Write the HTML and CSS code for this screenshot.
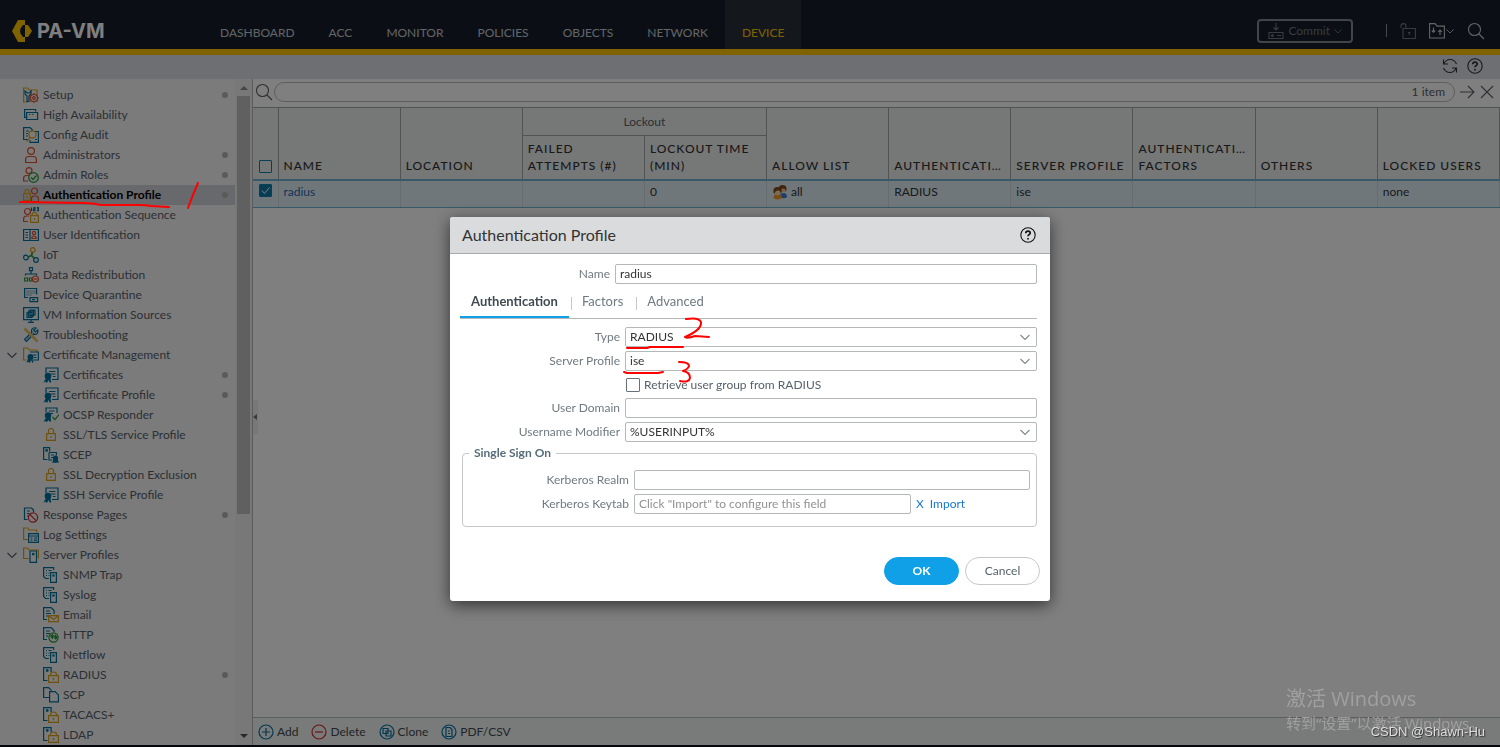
FILE: index.html
```html
<!DOCTYPE html>
<html lang="en">

<head>
    <meta charset="utf-8">
    <meta name="viewport" content="width=device-width, initial-scale=1.0">
    <title>PA-VM</title>
    <link rel="stylesheet" href="styles.css">
</head>

<body>

<!-- icon set -->
<svg class="sprite" aria-hidden="true">
  <symbol id="i-setup" viewBox="0 0 16 16"><path class="y" d="M5 15H.6V1h4l1.500 2H14v4"/><path class="b" d="M2 4v3l2 2v5.400h2V9l2-2V4L6.500 6h-2z"/><circle class="r" cx="11" cy="11" r="3.500"/><circle class="r" cx="11" cy="11" r="1.300"/><path class="r" d="M11 6v1.500M11 14.500V16M6 11h1.500M14.500 11H16M7.500 7.500l1 1M13.500 13.500l1 1M14.500 7.500l-1 1M8.500 13.500l-1 1"/></symbol>
  <symbol id="i-ha" viewBox="0 0 16 16"><path class="b" d="M3.600 10.500H1.600v-8h11v2M3.600 5.500h11v7h-11z"/><path class="g" d="M6 7.500h1.500M9 7.500h1.500"/></symbol>
  <symbol id="i-audit" viewBox="0 0 16 16"><path class="b" d="M5 12.500H.6V.6h6.500l2 2V4M3 4h3M3 6.500h2M3 9h2M12 4.500h3.400v10.900H7V13M12 12.500h2"/><circle class="y" cx="9.500" cy="7.500" r="3.600"/><path class="y" d="M7 10.500L3.500 14.500"/></symbol>
  <symbol id="i-admin" viewBox="0 0 16 16"><circle class="r" cx="8" cy="4" r="3.400"/><path class="r" d="M2.600 15.500v-3q0-3 3-3h4.800q3 0 3 3v3z"/></symbol>
  <symbol id="i-roles" viewBox="0 0 16 16"><circle class="r" cx="6" cy="3.600" r="3"/><path class="r" d="M5 14H.6v-2.500q0-3 3-3H6"/><circle class="g" cx="10.500" cy="10.500" r="4.800"/><path class="g" d="M8 10.500l2 2 3.500-4"/></symbol>
  <symbol id="i-auth" viewBox="0 0 16 16"><circle class="r" cx="11.500" cy="4" r="3"/><path class="r" d="M8.500 14.500h7V12q0-3-3-3h-1.500q-2.500 0-2.500 3z"/><path class="y" d="M.6 6.600h6.800v6.800H.6zM2 6.500v-2q0-2 2-2t2 2v2M4 9v2.500"/></symbol>
  <symbol id="i-seq" viewBox="0 0 16 16"><circle class="r" cx="4.500" cy="4.500" r="3"/><path class="r" d="M5 14.500H.6V12q0-3 3-3H6"/><path class="y" d="M7.600 8.600h7.800v6.800H7.600zM9 8.500V8q0-2.500 2.500-2.500T14 8v.5M11.500 11v2"/><path class="b" d="M8.500.5v3.500M10.500.6h1.500v1.500h-1.500v1.600h2M14 .6h1.500v3H14M14 2h1.500"/></symbol>
  <symbol id="i-userid" viewBox="0 0 16 16"><path class="b" d="M.6 2.500h14.800v11H.6zM7 2.500v11M2.500 5.500h2.500M2.500 8h2.500M2.500 10.500h2.500"/><circle class="r" cx="11" cy="6" r="1.600"/><path class="r" d="M8.800 11.500q0-2.500 2.200-2.500t2.200 2.500z"/></symbol>
  <symbol id="i-iot" viewBox="0 0 16 16"><path class="g w2" d="M5 10l3.500-1.500L9.500 5M8.500 8.500l3 3"/><circle class="y" cx="9.800" cy="2.900" r="2.300"/><circle class="b" cx="2.900" cy="10.500" r="2.300"/><circle class="b" cx="13" cy="13" r="2.300"/></symbol>
  <symbol id="i-redist" viewBox="0 0 16 16"><path class="b" d="M6.500.6h3v3h-3zM8 4v3M2.500 8.500V7h11v1.500"/><path class="g" d="M1.600 11h3v3h-3zM6.500 11h2.500v3H6.500z"/><circle class="r" cx="12.500" cy="12" r="3"/><path class="r" d="M10.800 12h3.400"/></symbol>
  <symbol id="i-quar" viewBox="0 0 16 16"><path class="b" d="M5 10.500H1.600v-9h12v6M7 10.600h7.600v4H7zM9 12.600h3"/><path class="b dash" d="M3.500 4h9M3.500 6h9M3.500 8h6"/></symbol>
  <symbol id="i-vm" viewBox="0 0 16 16"><path class="b" d="M.6.6h14.800v12H.6zM8 13v2.300M5 15.400h6"/><path class="b" d="M4 5.500h5v5H4zM7 3h5v5H7zM5.500 4.200h5v5h-5z"/></symbol>
  <symbol id="i-tools" viewBox="0 0 16 16"><path class="s w3" d="M4 12.500l7-7"/><path class="b" d="M14.800 3l-2.300 2-1.800-1.800L13 1q-3.500-1-4.500 2l.3 2.200L1.500 12.500l2 2 7.300-7.300q4.700.8 4-4.200z"/><path class="yw w3" d="M1.500 1.500L8 8l6.500 6.500"/></symbol>
  <symbol id="i-certmgt" viewBox="0 0 16 16"><path class="y" d="M5 13H.6V1h4l1.500 2h7.500v2"/><path class="b" d="M7 5h8.400v8H10M10 8h3.500M11 10.500h2.500"/><circle class="bf" cx="7.500" cy="10" r="3"/><path class="bf" d="M5.500 11.500l-2 4 2-.5 1.500 1 1-3 1.500 3 1-.8-1.500-3.700z"/></symbol>
  <symbol id="i-cert" viewBox="0 0 16 16"><path class="b" d="M3 6V1h12v11.500H9M6 4.500h6.500M8 7h4.500M10 9.500h2.500"/><circle class="bf" cx="5" cy="9" r="3.300"/><path class="bf" d="M3 11l-2.500 4.500 2.200-.8L4 16l1.500-3L7 16l1.200-1.200-1-4z"/></symbol>
  <symbol id="i-ocsp" viewBox="0 0 16 16"><path class="b" d="M3 5V1h11v5M6 4h5.500M7 6.500h3"/><circle class="bf" cx="5" cy="8.500" r="3.200"/><path class="bf" d="M3 11l-2.500 3.500 2.200-.3L4 15l1.500-2L7 15l1.200-1.200-1-4z"/><path class="g" d="M9.500 10l2.500 2.500 4-5"/></symbol>
  <symbol id="i-lock" viewBox="0 0 16 16"><path class="y" d="M3.600 6.600h8.800v6.800H3.600zM5.500 6.500V4q0-2.500 2.500-2.500T10.500 4v2.500"/><path class="y" d="M8 9v2"/></symbol>
  <symbol id="i-scep" viewBox="0 0 16 16"><path class="b" d="M4.500 12.500H.6V.6h6v4M6 5.500h7.400v3M6 5.500v7.500h3M8 8h3M8 10.500h2"/><circle class="b" cx="3.600" cy="3.500" r=".8"/><circle class="bf" cx="12.500" cy="11" r="2.600"/><path class="bf" d="M10.500 12L9 16l2-.5 1.500.5 1.500-.5 2 .3-1.500-3.800z"/></symbol>
  <symbol id="i-resp" viewBox="0 0 16 16"><path class="b" d="M4.500 12.500h-3V1h7l2 2v2M4 4h3M4 6.500h2.500M4 9h1"/><circle class="d" cx="10" cy="10.500" r="4.600"/><path class="d" d="M6.800 7.300l6.500 6.500"/></symbol>
  <symbol id="i-log" viewBox="0 0 16 16"><path class="y" d="M5 12.500H.6V1h4l1.500 2h7.500v2.500"/><path class="b" d="M5.600 6.600h9.800v8.800H5.600zM5.600 9h9.800M7.500 11h2M11 11h3M7.500 13.200h2M11 13.200h3"/></symbol>
  <symbol id="i-server" viewBox="0 0 16 16"><path class="y" d="M6 11.500H.6V1h4l1.500 2h9.300v8.500"/><path class="b" d="M7 4h6.500v11.400H7z"/><path class="b" d="M9.700 6.500h1.200v1.200H9.700z"/></symbol>
  <symbol id="i-trap" viewBox="0 0 16 16"><path class="b" d="M6 11.500H2.500L.6 9.500V.6h10v2.500M3 3.500h1M5.500 3.500h3M3 6h1M5.500 6h1M3 8.500h1M5.500 8.500h1M7.600 5.600h5.800v9.800H7.600z"/><path class="b" d="M10 8h1v1h-1z"/></symbol>
  <symbol id="i-email" viewBox="0 0 16 16"><path class="b" d="M4 12.500H.6V.6h7.500l3 3V7M3 4h4M3 6.500h5M3 9h2"/><path class="y" d="M5.600 8.600h9.800v6H5.600zM6 9l4.500 3.500L15 9"/></symbol>
  <symbol id="i-http" viewBox="0 0 16 16"><path class="b" d="M4 12.500H.6V.6h7.500l3 3V5M3 4h4M3 6.500h4M3 9h2"/><circle class="g" cx="10.500" cy="10.500" r="4.600"/><path class="gf" d="M7 9l3-2 1 2-1.500 3.500zM12 7l2.500 3-1.500 3-2-2z"/></symbol>
  <symbol id="i-radius" viewBox="0 0 16 16"><path class="b" d="M4.500 13.500H.6V.6h7.500V5"/><circle class="b" cx="4.300" cy="3.500" r=".8"/><path class="y" d="M5.600 8.600h9.800v6.800H5.600zM7.500 8.500V7.500Q7.500 5 10.500 5t3 2.500v1M10.500 11v2.200M9.500 11.500h2"/></symbol>
  <symbol id="i-scp" viewBox="0 0 16 16"><path class="b" d="M6 10.500H.6V.6h5l3 3M6.600 4.600h5.500l3.300 3.300v7H6.600z"/></symbol>
  <symbol id="i-search" viewBox="0 0 18 18"><circle cx="7.500" cy="7.500" r="6"/><path d="M12 12l5 5"/></symbol>
  <symbol id="i-help" viewBox="0 0 16 16"><circle cx="8" cy="8" r="7.200"/><path class="w2" d="M5.800 6.300q0-2.200 2.200-2.200t2.200 2q0 1-1.200 1.700-1 .6-1 1.500M8 11v1.500"/></symbol>
  <symbol id="i-down" viewBox="0 0 10 10"><path d="M.5 3l4.500 4.500L9.500 3"/></symbol>
</svg>

<header class="topbar">
    <div class="brand">
        <svg class="brand-mark" viewBox="0 0 20 22" aria-hidden="true"><path d="M13 0v5H11Q8 8 8 11t3 6h2v5H6L0 11 6 0z"/><path d="M13 5h3l4 6-4 6h-3z"/></svg>
        <span class="brand-name">PA-VM</span>
    </div>
    <nav class="mainnav">
        <a href="#">DASHBOARD</a>
        <a href="#">ACC</a>
        <a href="#">MONITOR</a>
        <a href="#">POLICIES</a>
        <a href="#">OBJECTS</a>
        <a href="#">NETWORK</a>
        <a href="#" class="on">DEVICE</a>
    </nav>
    <div class="tools">
        <button type="button" class="commit">
            <svg class="ico line" viewBox="0 0 16 16"><path d="M8 0v7M5.500 4.500L8 7l2.500-2.500M1 9.500h14v6H1zM9 12.500h4"/><circle cx="4.500" cy="12.500" r="1"/></svg>
            Commit
            <svg class="caret line"><use href="#i-down"/></svg>
        </button>
        <span class="sep"></span>
        <button type="button" class="plain dimmed" aria-label="Locks"><svg class="ico line" viewBox="0 0 16 16"><path d="M3 5.500h12.400v10H3zM1 5V3q0-2.400 2.500-2.400T6 3v2.500M9.200 9v3M8 9.500h2.400"/></svg></button>
        <button type="button" class="plain config" aria-label="Config"><svg class="ico line" viewBox="0 0 16 16"><path d="M.6 15V.6H6l2 2.500h7.400V15zM4.500 4.500V9M2.800 7.500L4.500 9.200l1.700-1.700M11 12V7M9.200 8.800L11 7l1.800 1.800"/></svg><svg class="caret line"><use href="#i-down"/></svg></button>
        <button type="button" class="plain" aria-label="Search"><svg class="ico-lg line"><use href="#i-search"/></svg></button>
    </div>
</header>

<div class="subbar">
    <button type="button" class="plain" aria-label="Refresh"><svg class="ico line" viewBox="0 0 16 16"><path d="M1.500 1.500v4.500H6M1.700 6Q4 1.500 8 1.500q4.500 0 6.500 4.500M14.500 14.500V10H10M14.300 10Q12 14.500 8 14.500q-4.500 0-6.500-4.500"/></svg></button>
    <button type="button" class="plain" aria-label="Help"><svg class="ico line"><use href="#i-help"/></svg></button>
</div>

<div class="work">
    <aside class="side">
        <ul class="tree">
            <li><svg class="ico"><use href="#i-setup"/></svg><a href="#">Setup</a><i class="dot"></i></li>
            <li><svg class="ico"><use href="#i-ha"/></svg><a href="#">High Availability</a></li>
            <li><svg class="ico"><use href="#i-audit"/></svg><a href="#">Config Audit</a></li>
            <li><svg class="ico"><use href="#i-admin"/></svg><a href="#">Administrators</a><i class="dot"></i></li>
            <li><svg class="ico"><use href="#i-roles"/></svg><a href="#">Admin Roles</a><i class="dot"></i></li>
            <li class="current"><svg class="ico"><use href="#i-auth"/></svg><a href="#">Authentication Profile</a><i class="dot"></i></li>
            <li><svg class="ico"><use href="#i-seq"/></svg><a href="#">Authentication Sequence</a></li>
            <li><svg class="ico"><use href="#i-userid"/></svg><a href="#">User Identification</a></li>
            <li><svg class="ico"><use href="#i-iot"/></svg><a href="#">IoT</a></li>
            <li><svg class="ico"><use href="#i-redist"/></svg><a href="#">Data Redistribution</a></li>
            <li><svg class="ico"><use href="#i-quar"/></svg><a href="#">Device Quarantine</a></li>
            <li><svg class="ico"><use href="#i-vm"/></svg><a href="#">VM Information Sources</a></li>
            <li><svg class="ico"><use href="#i-tools"/></svg><a href="#">Troubleshooting</a></li>
            <li class="open"><svg class="twisty line"><use href="#i-down"/></svg><svg class="ico"><use href="#i-certmgt"/></svg><a href="#">Certificate Management</a></li>
            <li class="sub"><svg class="ico"><use href="#i-cert"/></svg><a href="#">Certificates</a><i class="dot"></i></li>
            <li class="sub"><svg class="ico"><use href="#i-cert"/></svg><a href="#">Certificate Profile</a><i class="dot"></i></li>
            <li class="sub"><svg class="ico"><use href="#i-ocsp"/></svg><a href="#">OCSP Responder</a></li>
            <li class="sub"><svg class="ico"><use href="#i-lock"/></svg><a href="#">SSL/TLS Service Profile</a></li>
            <li class="sub"><svg class="ico"><use href="#i-scep"/></svg><a href="#">SCEP</a></li>
            <li class="sub"><svg class="ico"><use href="#i-lock"/></svg><a href="#">SSL Decryption Exclusion</a></li>
            <li class="sub"><svg class="ico"><use href="#i-cert"/></svg><a href="#">SSH Service Profile</a></li>
            <li><svg class="ico"><use href="#i-resp"/></svg><a href="#">Response Pages</a><i class="dot"></i></li>
            <li><svg class="ico"><use href="#i-log"/></svg><a href="#">Log Settings</a></li>
            <li class="open"><svg class="twisty line"><use href="#i-down"/></svg><svg class="ico"><use href="#i-server"/></svg><a href="#">Server Profiles</a></li>
            <li class="sub"><svg class="ico"><use href="#i-trap"/></svg><a href="#">SNMP Trap</a></li>
            <li class="sub"><svg class="ico"><use href="#i-trap"/></svg><a href="#">Syslog</a></li>
            <li class="sub"><svg class="ico"><use href="#i-email"/></svg><a href="#">Email</a></li>
            <li class="sub"><svg class="ico"><use href="#i-http"/></svg><a href="#">HTTP</a></li>
            <li class="sub"><svg class="ico"><use href="#i-trap"/></svg><a href="#">Netflow</a></li>
            <li class="sub"><svg class="ico"><use href="#i-radius"/></svg><a href="#">RADIUS</a><i class="dot"></i></li>
            <li class="sub"><svg class="ico"><use href="#i-scp"/></svg><a href="#">SCP</a></li>
            <li class="sub"><svg class="ico"><use href="#i-radius"/></svg><a href="#">TACACS+</a></li>
            <li class="sub"><svg class="ico"><use href="#i-radius"/></svg><a href="#">LDAP</a></li>
        </ul>
        <div class="scroll">
            <svg class="arrow" viewBox="0 0 8 4"><path d="M0 4l4-4 4 4z"/></svg>
            <span class="thumb"></span>
            <svg class="arrow dark" viewBox="0 0 8 4"><path d="M0 0l4 4 4-4z"/></svg>
        </div>
    </aside>

    <main class="grid">
        <span class="collapse"><svg viewBox="0 0 4 6"><path d="M4 0v6L0 3z"/></svg></span>
        <div class="searchrow">
            <svg class="ico-lg line"><use href="#i-search"/></svg>
            <div class="searchbox">
                <input type="text" aria-label="Filter">
                <span>1 item</span>
            </div>
            <button type="button" class="plain" aria-label="Apply filter"><svg class="ico line" viewBox="0 0 16 16"><path d="M1 8h14M9 2l6 6-6 6"/></svg></button>
            <button type="button" class="plain" aria-label="Clear filter"><svg class="ico line" viewBox="0 0 16 16"><path d="M2 2l12 12M14 2L2 14"/></svg></button>
        </div>

        <div class="tablewrap">
        <table class="profiles">
            <colgroup><col class="c-check"><col span="10"></colgroup>
            <thead>
                <tr>
                    <th rowspan="2" class="check"><input type="checkbox" aria-label="Select all"></th>
                    <th rowspan="2">NAME</th>
                    <th rowspan="2">LOCATION</th>
                    <th colspan="2" class="group">Lockout</th>
                    <th rowspan="2">ALLOW LIST</th>
                    <th rowspan="2">AUTHENTICATI…</th>
                    <th rowspan="2">SERVER PROFILE</th>
                    <th rowspan="2">AUTHENTICATI… FACTORS</th>
                    <th rowspan="2">OTHERS</th>
                    <th rowspan="2">LOCKED USERS</th>
                </tr>
                <tr class="second">
                    <th>FAILED ATTEMPTS (#)</th>
                    <th>LOCKOUT TIME (MIN)</th>
                </tr>
            </thead>
            <tbody>
                <tr>
                    <td class="check"><input type="checkbox" aria-label="Select radius" checked></td>
                    <td><a href="#">radius</a></td>
                    <td></td>
                    <td></td>
                    <td>0</td>
                    <td><span class="who"><svg class="ico" viewBox="0 0 16 16"><path fill="#3d7fd0" d="M8 13q0-4 3.500-4t3.500 4q-2 2-5 1z"/><circle fill="#f0c080" cx="11" cy="5.500" r="2.600"/><path fill="#80491a" d="M7 6q-1-5 3.500-5Q15 1 14.500 6l-1 2Q14 4 11 4.500z"/><path fill="#f59a23" d="M1.500 14q0-4 4-4t4.500 4q-4 3-8.500 0z"/><circle fill="#fbd9a5" cx="5.500" cy="8.500" r="2.800"/><path fill="#80491a" d="M1.500 8.500q-1-5.500 4-5.500t4 5.500L8.500 10Q9 6.500 6 6.500 3 6.500 2.500 10z"/></svg>all</span></td>
                    <td>RADIUS</td>
                    <td>ise</td>
                    <td></td>
                    <td></td>
                    <td>none</td>
                </tr>
            </tbody>
        </table>
        </div>

        <div class="actions">
            <button type="button" class="plain"><svg class="ico" viewBox="0 0 16 16"><circle class="b" cx="8" cy="8" r="7"/><path class="b" d="M8 4v8M4 8h8"/></svg>Add</button>
            <button type="button" class="plain"><svg class="ico" viewBox="0 0 16 16"><circle class="d" cx="8" cy="8" r="7"/><path class="d" d="M4 8h8"/></svg>Delete</button>
            <button type="button" class="plain"><svg class="ico" viewBox="0 0 16 16"><circle class="b" cx="8" cy="8" r="7"/><path class="b" d="M4 4.500h5v5H4zM7 7h5v5H7z"/></svg>Clone</button>
            <button type="button" class="plain"><svg class="ico" viewBox="0 0 16 16"><circle class="b" cx="8" cy="8" r="7"/><path class="b" d="M5 3.500h4l2 2v7H5zM7 7h2M7 9.500h2"/></svg>PDF/CSV</button>
        </div>
    </main>
</div>

<div class="mask">
    <section class="dialog" role="dialog" aria-labelledby="dlg-title">
        <div class="dlg-head">
            <h1 id="dlg-title">Authentication Profile</h1>
            <button type="button" class="plain" aria-label="Help"><svg class="ico line"><use href="#i-help"/></svg></button>
        </div>
        <form class="dlg-body">
            <div class="row name">
                <label for="name">Name</label>
                <input type="text" id="name" value="radius">
            </div>

            <div class="tabs">
                <button type="button" class="tab on">Authentication</button>
                <button type="button" class="tab">Factors</button>
                <button type="button" class="tab">Advanced</button>
            </div>

            <div class="fields">
                <div class="row">
                    <label for="type">Type</label>
                    <div class="pick"><select id="type"><option>RADIUS</option></select><svg class="line"><use href="#i-down"/></svg></div>
                </div>
                <div class="row">
                    <label for="server">Server Profile</label>
                    <div class="pick"><select id="server"><option>ise</option></select><svg class="line"><use href="#i-down"/></svg></div>
                </div>
                <div class="row tick">
                    <input type="checkbox" id="group"><label for="group">Retrieve user group from RADIUS</label>
                </div>
                <div class="row">
                    <label for="domain">User Domain</label>
                    <input type="text" id="domain">
                </div>
                <div class="row">
                    <label for="modifier">Username Modifier</label>
                    <div class="pick"><select id="modifier"><option>%USERINPUT%</option></select><svg class="line"><use href="#i-down"/></svg></div>
                </div>
            </div>

            <fieldset class="sso">
                <legend>Single Sign On</legend>
                <div class="row">
                    <label for="realm">Kerberos Realm</label>
                    <input type="text" id="realm">
                </div>
                <div class="row">
                    <label for="keytab">Kerberos Keytab</label>
                    <input type="text" id="keytab" placeholder="Click &quot;Import&quot; to configure this field">
                    <span class="links"><a href="#">X</a><a href="#">Import</a></span>
                </div>
            </fieldset>

            <div class="dlg-foot">
                <button type="submit" class="btn ok">OK</button>
                <button type="button" class="btn">Cancel</button>
            </div>
        </form>
        <svg class="ink ink-dialog" viewBox="0 0 600 384" aria-hidden="true">
            <path d="M236 102q13-2 15 3 1 8-16 15 2 2 10-1l14 1"/>
            <path d="M177 131h20l3-1h33"/>
            <path d="M174 155l3 1h31l5-1"/>
            <path d="M229 145q10 0 10 4-1 3-6 5 7 1 7 7-1 5-10 3"/>
        </svg>
    </section>
</div>

<svg class="ink ink-side" viewBox="0 0 240 40" aria-hidden="true">
    <path d="M20 22l64 1q9 0 17 2l37 0q8 0 13 1l18 1"/>
    <path d="M198 3q-5 11-10 25"/>
</svg>

<div class="activate">
    <p class="big">激活 Windows</p>
    <p>转到“设置”以激活 Windows。</p>
</div>
<p class="credit">CSDN @Shawn-Hu</p>

</body>
</html>
```

FILE: styles.css
```css
* {
  box-sizing: border-box;
}

body {
  margin: 0;
  height: 100vh;
  display: flex;
  flex-direction: column;
  overflow: hidden;
  background: #ffffff;
  border-bottom: 2px solid #0a0f16;
  font-family: Lato, "Liberation Sans", sans-serif;
  font-size: 12px;
  line-height: 20px;
  color: #333333;
}

a {
  color: inherit;
  text-decoration: none;
}

button, input, select {
  font: inherit;
  color: inherit;
}

.plain {
  display: flex;
  align-items: center;
  padding: 0;
  border: 0;
  background: none;
}

/* icons */
.sprite {
  position: absolute;
  width: 0;
  height: 0;
}

.ico {
  width: 16px;
  height: 16px;
  flex: none;
}

.ico-lg {
  width: 18px;
  height: 18px;
  flex: none;
}

.line {
  fill: none;
  stroke: currentColor;
  stroke-width: 1.1;
}

.b, .y, .r, .g, .d, .s, .yw {
  fill: none;
  stroke-width: 1.2;
}

.b { stroke: #00709e; }
.y { stroke: #dfa21c; }
.r { stroke: #e0512f; }
.g { stroke: #1f9a34; }
.d { stroke: #d02a30; }
.s { stroke: #9ccbe0; }
.yw { stroke: #e8bf62; }
.bf { fill: #00709e; }
.gf { fill: #1f9a34; }
.w2 { stroke-width: 1.7; }
.w3 { stroke-width: 2.6; }
.dash { stroke-dasharray: 1 1; }

/* top bar */
.topbar {
  flex: none;
  display: flex;
  height: 55px;
  border-bottom: 6px solid #ffc600;
  background: #161e2a;
  color: #c5cad0;
}

.brand {
  display: flex;
  align-items: center;
  gap: 5px;
  width: 203px;
  padding: 12px 0 0 12px;
}

.brand-mark {
  width: 20px;
  height: 22px;
  fill: #ffc600;
}

.brand-name {
  font-family: Inter, sans-serif;
  font-size: 20px;
  font-weight: 700;
  color: #ffffff;
}

.mainnav {
  display: flex;
}

.mainnav a {
  padding: 23px 17px 0;
}

.mainnav .on {
  background: #29303a;
  color: #ffc600;
}

.tools {
  display: flex;
  align-items: center;
  gap: 13px;
  margin-left: auto;
  padding: 12px 15px 0 0;
}

.commit {
  display: flex;
  align-items: center;
  gap: 4px;
  height: 24px;
  padding: 0 9px;
  margin-right: 20px;
  border: 2px solid #85898e;
  border-radius: 4px;
  background: none;
  color: #71777e;
}

.caret {
  width: 8px;
  height: 8px;
}

.config {
  gap: 1px;
}

.sep {
  width: 1px;
  height: 13px;
  background: #8d9299;
}

.dimmed {
  color: #71777e;
}

.subbar {
  flex: none;
  display: flex;
  justify-content: flex-end;
  gap: 9px;
  height: 24px;
  padding: 0 17px 2px 0;
  background: #dddfe4;
}

/* tree */
.work {
  flex: 1;
  display: flex;
  min-height: 0;
}

.side {
  flex: none;
  display: flex;
  width: 253px;
  overflow: hidden;
  border-right: 1px solid #b4b8bb;
  background: #f6f6f6;
}

.tree {
  flex: 1;
  margin: 0;
  padding: 6px 0 0;
  list-style: none;
  color: #56616b;
}

.tree li {
  display: flex;
  align-items: center;
  gap: 4px;
  height: 20px;
  padding: 0 7px 0 23px;
}

.tree .sub {
  padding-left: 43px;
}

.tree .open {
  padding-left: 7px;
}

.tree .current {
  background: #d0d3d9;
  color: #000000;
  font-weight: 700;
}

.twisty {
  width: 10px;
  height: 10px;
  margin-right: 2px;
}

.dot {
  width: 6px;
  height: 6px;
  margin-left: auto;
  border-radius: 50%;
  background: #b4b4b4;
}

.scroll {
  display: flex;
  flex-direction: column;
  align-items: center;
  width: 17px;
  padding: 7px 0;
  background: #f1f1f1;
}

.thumb {
  width: 13px;
  height: 418px;
  margin: 6px 0 auto;
  background: #c1c1c1;
}

.arrow {
  width: 8px;
  height: 4px;
  fill: #8a8a8a;
}

.arrow.dark {
  fill: #505050;
}

/* grid */
.grid {
  position: relative;
  flex: 1;
  display: flex;
  flex-direction: column;
  min-width: 0;
}

.collapse {
  position: absolute;
  top: 321px;
  left: 0;
  display: flex;
  align-items: center;
  width: 5px;
  height: 34px;
  background: #f0f0f0;
}

.collapse svg {
  width: 4px;
  height: 6px;
  fill: #777777;
}

.searchrow {
  display: flex;
  align-items: center;
  gap: 4px;
  height: 28px;
  padding: 0 5px 2px 2px;
  color: #5b6065;
}

.searchrow .ico-lg {
  margin-right: -3px;
}

.searchbox {
  flex: 1;
  display: flex;
  height: 20px;
  padding: 0 9px;
  border: 1px solid #b9bdc0;
  border-radius: 10px;
  line-height: 18px;
}

.searchbox input {
  flex: 1;
  min-width: 0;
  padding: 0;
  border: 0;
  background: none;
}

.searchrow .plain {
  width: 16px;
}

.tablewrap {
  flex: 1;
}

.profiles {
  width: 100%;
  table-layout: fixed;
  border-collapse: collapse;
}

.c-check {
  width: 25px;
}

.profiles th {
  padding: 0 5px 5px;
  border: 1px solid #a2a6a8;
  border-left: 0;
  background: #ecefee;
  font-weight: 500;
  line-height: 17px;
  letter-spacing: 1px;
  text-align: left;
  vertical-align: bottom;
}

.profiles .group {
  height: 28px;
  font-weight: 400;
  letter-spacing: 0;
  text-align: center;
  color: #56616b;
}

.profiles .second th {
  height: 44px;
}

.profiles td {
  height: 28px;
  padding: 0 5px 4px;
  border: 1px solid #cfd9de;
  border-width: 2px 1px 1px 0;
  border-top-color: #6fb3d2;
  border-bottom-color: #6fb3d2;
  background: #e0eff6;
}

.profiles td a {
  color: #2b67b0;
}

.profiles .check {
  padding: 0 5px 6px 6px;
}

.check input {
  appearance: none;
  display: block;
  width: 13px;
  height: 13px;
  margin: 0;
  border: 1px solid #1481ad;
  border-radius: 1px;
}

.check input:checked {
  background: #0b7aa8 url("data:image/svg+xml,%3Csvg xmlns='http://www.w3.org/2000/svg' viewBox='0 0 11 11'%3E%3Cpath d='M2 5.500l2.500 3L9.500 2.500' fill='none' stroke='white'/%3E%3C/svg%3E");
}

.who {
  display: flex;
  align-items: center;
  gap: 3px;
}

.actions {
  display: flex;
  align-items: center;
  gap: 13px;
  height: 28px;
  padding-left: 5px;
  border-top: 1px solid #b9bdc0;
  background: #f3f6f5;
}

.actions .plain {
  gap: 3px;
  color: #414a52;
}

/* dialog */
.mask {
  position: fixed;
  inset: 0;
  padding-top: 217px;
  background: rgba(0, 0, 0, 0.5);
}

.dialog {
  position: relative;
  width: 600px;
  max-width: 100%;
  margin: 0 auto;
  border-radius: 3px;
  background: #ffffff;
  box-shadow: 0 4px 16px rgba(0, 0, 0, 0.6);
}

.dlg-head {
  display: flex;
  align-items: center;
  justify-content: space-between;
  height: 37px;
  padding: 0 14px 0 12px;
  border-bottom: 1px solid #a5aeac;
  border-radius: 3px 3px 0 0;
  background: #dadbdd;
  color: #111111;
}

.dlg-head h1 {
  margin: 0;
  font-size: 16px;
  font-weight: 400;
  color: #333333;
}

.dlg-body {
  padding: 10px 10px 16px;
}

.row {
  display: flex;
  align-items: center;
  gap: 5px;
  height: 20px;
}

.row label {
  flex: none;
  width: 160px;
  text-align: right;
  color: #707a81;
}

.row.name {
  padding-right: 3px;
}

.row.name label {
  width: 150px;
}

.row input[type="text"], .pick {
  flex: 1;
  min-width: 0;
  height: 20px;
  border: 1px solid #b4b8bb;
  border-radius: 2px;
  background: #ffffff;
}

.row input[type="text"] {
  padding: 0 4px;
}

.row input::placeholder {
  color: #929292;
}

.pick {
  position: relative;
}

.pick select {
  appearance: none;
  display: block;
  width: 100%;
  height: 18px;
  padding: 0 4px;
  border: 0;
  background: none;
  line-height: 18px;
}

.pick svg {
  position: absolute;
  top: 4px;
  right: 6px;
  width: 10px;
  height: 10px;
  color: #7d878e;
  pointer-events: none;
}

.tabs {
  display: flex;
  height: 29px;
  margin: 6px 3px 8px 0;
  border-bottom: 1px solid #b4b8bb;
}

.tab {
  position: relative;
  padding: 0 12px 6px;
  border: 0;
  background: none;
  color: #707a81;
  font-size: 13px;
}

.tab + .tab::before {
  content: "";
  position: absolute;
  top: 7px;
  left: 1px;
  height: 13px;
  border-left: 1px solid #c4c8ca;
}

.tab.on {
  padding: 0 11px 4px;
  margin-right: 1px;
  border-bottom: 2px solid #0fa0e8;
  color: #414a52;
  font-weight: 700;
}

.fields {
  display: flex;
  flex-direction: column;
  gap: 4px;
  padding-right: 3px;
}

.row.tick {
  gap: 4px;
  height: 19px;
  padding-left: 166px;
}

.row.tick label {
  width: auto;
  color: #56616b;
}

.row.tick input {
  appearance: none;
  width: 14px;
  height: 14px;
  margin: 0;
  border: 1px solid #66717a;
  border-radius: 1px;
}

.sso {
  display: flex;
  flex-direction: column;
  gap: 4px;
  min-width: 0;
  margin: 1px 3px 0 2px;
  padding: 7px 6px 12px;
  border: 1px solid #c4c8ca;
  border-radius: 4px;
}

.sso legend {
  padding: 0 5px;
  font-weight: 700;
  color: #566d7b;
}

.sso .links {
  display: flex;
  gap: 6px;
  width: 114px;
  color: #1478d4;
}

.dlg-foot {
  display: flex;
  justify-content: flex-end;
  gap: 6px;
  margin-top: 30px;
}

.btn {
  width: 75px;
  height: 28px;
  padding: 0;
  border: 1px solid #c4c8ca;
  border-radius: 14px;
  background: #ffffff;
  color: #56616b;
}

.btn.ok {
  border-color: #0fa0e8;
  background: #0fa0e8;
  color: #ffffff;
  font-weight: 700;
}

/* pen marks */
.ink {
  position: absolute;
  fill: none;
  stroke: #ff0000;
  stroke-width: 2;
  stroke-linecap: round;
  stroke-linejoin: round;
  pointer-events: none;
}

.ink-dialog {
  top: 0;
  left: 0;
  width: 600px;
  height: 384px;
}

.ink-side {
  top: 180px;
  left: 0;
  width: 240px;
  height: 40px;
}

/* watermarks */
.activate {
  position: fixed;
  right: 14px;
  bottom: 12px;
  width: 200px;
  font-family: "Open Sans", "Noto Sans CJK SC", sans-serif;
  font-size: 15px;
  line-height: 24px;
  white-space: nowrap;
  color: #a0a0a0;
}

.activate p {
  margin: 0;
}

.activate .big {
  font-size: 20px;
}

.credit {
  position: fixed;
  right: 15px;
  bottom: 5px;
  margin: 0;
  font-family: "Liberation Sans", sans-serif;
  font-size: 13px;
  color: #dddddd;
  text-shadow: 1px 1px 1px #333333;
}
```
